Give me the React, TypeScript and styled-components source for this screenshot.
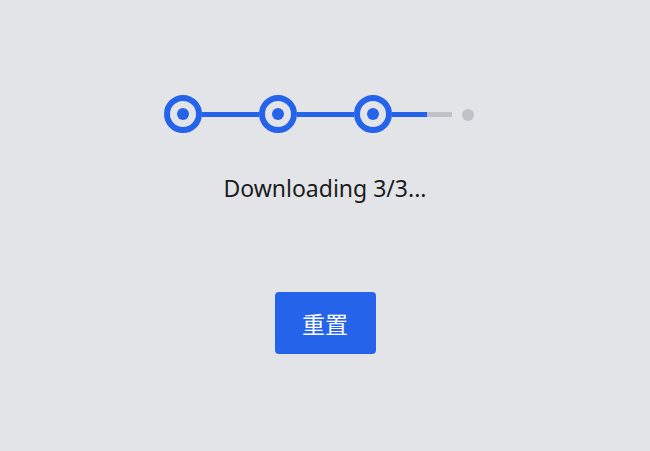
import React from "react";
import styled, { createGlobalStyle } from "styled-components";

const Global = createGlobalStyle`
  html, body { margin: 0; padding: 0; background: #e3e4e8; }
  body { font-family: "Noto Sans", "Open Sans", sans-serif; }
`;

const BLUE = "#2563eb";
const GREY = "#c0c1c9";

const Page = styled.div`
  width: 650px;
  height: 451px;
  display: flex;
  flex-direction: column;
  align-items: center;
  padding-top: 95px;
  box-sizing: border-box;
  background: #e3e4e8;
`;

const Stepper = styled.div`
  display: flex;
  align-items: center;
  padding-right: 12px;
  height: 38px;
`;

const Ring = styled.div`
  width: 38px;
  height: 38px;
  box-sizing: border-box;
  border: 6px solid ${BLUE};
  border-radius: 50%;
  display: flex;
  align-items: center;
  justify-content: center;
  flex-shrink: 0;
`;

const Core = styled.div`
  width: 12px;
  height: 12px;
  border-radius: 50%;
  background: ${BLUE};
`;

const Connector = styled.div<{ $w: number }>`
  width: ${(p) => p.$w}px;
  height: 5px;
  margin-top: 1px;
  background: ${GREY};
  position: relative;
  overflow: hidden;
  flex-shrink: 0;
`;

const Fill = styled.div`
  height: 100%;
  background: ${BLUE};
`;

const Pending = styled.div`
  width: 12px;
  height: 12px;
  border-radius: 50%;
  background: ${GREY};
  margin-left: 10px;
  margin-top: 1px;
  flex-shrink: 0;
`;

const Status = styled.div`
  margin-top: 40px;
  font-size: 23px;
  line-height: 30px;
  color: #1c1c20;
`;

const ResetButton = styled.button`
  margin-top: 89px;
  width: 101px;
  height: 62px;
  border: none;
  border-radius: 4px;
  background: ${BLUE};
  color: #ffffff;
  font-family: "Noto Sans CJK SC", "Noto Sans", sans-serif;
  font-size: 23px;
  display: flex;
  align-items: center;
  justify-content: center;
  padding: 0;
  cursor: pointer;
`;

const Step = () => (
  <Ring>
    <Core />
  </Ring>
);

const Line = ({ width, progress }: { width: number; progress: number }) => (
  <Connector $w={width}>
    <Fill style={{ width: `${progress * 100}%` }} />
  </Connector>
);

export default function App() {
  return (
    <>
      <Global />
      <Page>
        <Stepper>
          <Step />
          <Line width={57} progress={1} />
          <Step />
          <Line width={57} progress={1} />
          <Step />
          <Line width={60} progress={35 / 60} />
          <Pending />
        </Stepper>
        <Status>Downloading 3/3...</Status>
        <ResetButton>重置</ResetButton>
      </Page>
    </>
  );
}
